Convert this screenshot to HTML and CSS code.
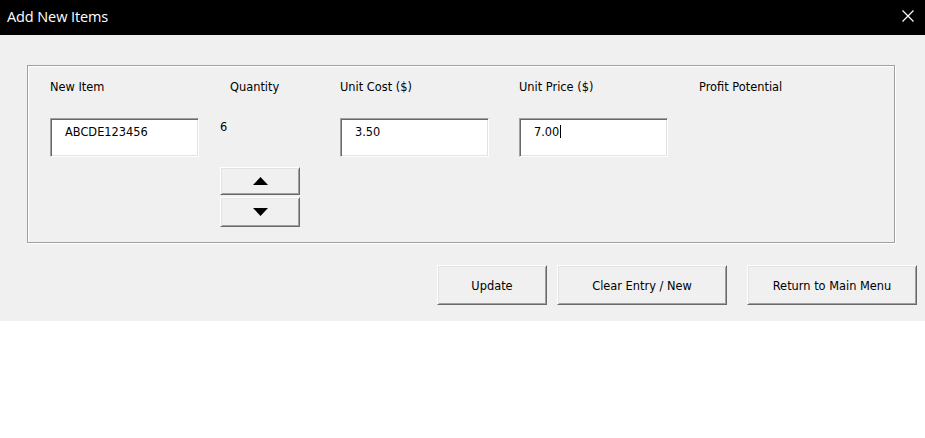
FILE: index.html
```html
<!DOCTYPE html>
<html>
<head>
<meta charset="utf-8">
<link rel="stylesheet" href="styles.css">
<title>Add New Items</title>
</head>
<body>
<div class="window">
  <div class="titlebar">
    <span class="title">Add New Items</span>
    <span class="close">
      <svg width="12" height="12" viewBox="0 0 12 12"><path d="M0.5 0.5 L11.5 11.5 M11.5 0.5 L0.5 11.5" stroke="#fff" stroke-width="1.2" fill="none"/></svg>
    </span>
  </div>
  <div class="client">
    <div class="frame">
      <div class="grid">
        <div class="label">New Item</div>
        <div class="label qty-label">Quantity</div>
        <div class="label">Unit Cost ($)</div>
        <div class="label">Unit Price ($)</div>
        <div class="label">Profit Potential</div>

        <div class="field"><span class="text">ABCDE123456</span></div>
        <div class="qty">
          <div class="qty-value">6</div>
          <div class="spin">
            <div class="spin-btn up"><svg width="15" height="8" viewBox="0 0 15 8"><path d="M7.5 0 L15 8 L0 8 Z" fill="#000"/></svg></div>
            <div class="spin-btn down"><svg width="15" height="8" viewBox="0 0 15 8"><path d="M0 0 L15 0 L7.5 8 Z" fill="#000"/></svg></div>
          </div>
        </div>
        <div class="field"><span class="text">3.50</span></div>
        <div class="field"><span class="text">7.00</span><span class="caret"></span></div>
        <div></div>
      </div>
    </div>
    <div class="actions">
      <div class="btn w110">Update</div>
      <div class="btn w170">Clear Entry / New</div>
      <div class="btn w170 gap-left">Return to Main Menu</div>
    </div>
  </div>
</div>
</body>
</html>
```

FILE: styles.css
```css
html, body {
  margin: 0;
  padding: 0;
  background: #ffffff;
}
body {
  font-family: "DejaVu Sans", Tahoma, sans-serif;
  font-size: 11.4px;
  color: #000;
}
.window {
  width: 925px;
}
.titlebar {
  height: 35px;
  background: #000;
  color: #fff;
  display: flex;
  align-items: center;
  justify-content: space-between;
  padding: 0 11px 3px 7px;
  box-sizing: border-box;
}
.title {
  font-family: "Open Sans", "Noto Sans", sans-serif;
  font-size: 14.5px;
  letter-spacing: -0.1px;
}
.close {
  display: flex;
  width: 12px;
  height: 12px;
}
.client {
  background: #f0f0f0;
  padding: 30px 0 16px 27px;
}
.frame {
  width: 868px;
  height: 178px;
  box-sizing: border-box;
  border: 1px solid #a0a0a0;
  box-shadow: inset 1px 1px 0 #ffffff, 1px 1px 0 #ffffff;
}
.grid {
  display: grid;
  grid-template-columns: 170px 120px 179px 180px 1fr;
  grid-template-rows: 14px auto;
  row-gap: 24px;
  padding: 14px 0 0 22px;
}
.label {
  line-height: 14px;
  white-space: nowrap;
}
.qty-label {
  padding-left: 10px;
}
.field {
  width: 149px;
  height: 39px;
  box-sizing: border-box;
  background: #fff;
  border-top: 1px solid #a0a0a0;
  border-left: 1px solid #a0a0a0;
  border-right: 1px solid #ffffff;
  border-bottom: 1px solid #ffffff;
  box-shadow: inset 1px 1px 0 #696969, inset -1px -1px 0 #e3e3e3;
  padding: 6px 0 0 14px;
  line-height: 14px;
  display: flex;
  align-items: flex-start;
}
.caret {
  display: inline-block;
  width: 1px;
  height: 13px;
  background: #000;
  margin-left: 1px;
  margin-top: 0;
}
.qty {
  display: flex;
  flex-direction: column;
}
.qty-value {
  line-height: 14px;
  padding-top: 2px;
}
.spin {
  margin-top: 33px;
  display: flex;
  flex-direction: column;
  gap: 2px;
  width: 80px;
}
.spin-btn {
  box-sizing: border-box;
  background: #f0f0f0;
  border-top: 1px solid #ffffff;
  border-left: 1px solid #ffffff;
  border-right: 1px solid #696969;
  border-bottom: 1px solid #696969;
  box-shadow: inset 1px 1px 0 #e3e3e3, inset -1px -1px 0 #a0a0a0;
  display: flex;
  align-items: center;
  justify-content: center;
}
.spin-btn.up {
  height: 28px;
}
.spin-btn.down {
  height: 30px;
}
.actions {
  display: flex;
  justify-content: flex-end;
  gap: 10px;
  margin-top: 22px;
  padding-right: 8px;
}
.btn {
  height: 40px;
  box-sizing: border-box;
  padding-top: 2px;
  background: #f0f0f0;
  border-top: 1px solid #ffffff;
  border-left: 1px solid #ffffff;
  border-right: 1px solid #696969;
  border-bottom: 1px solid #696969;
  box-shadow: inset 1px 1px 0 #e3e3e3, inset -1px -1px 0 #a0a0a0;
  display: flex;
  align-items: center;
  justify-content: center;
  white-space: nowrap;
}
.w110 { width: 110px; }
.w170 { width: 170px; }
.gap-left { margin-left: 10px; }
```
